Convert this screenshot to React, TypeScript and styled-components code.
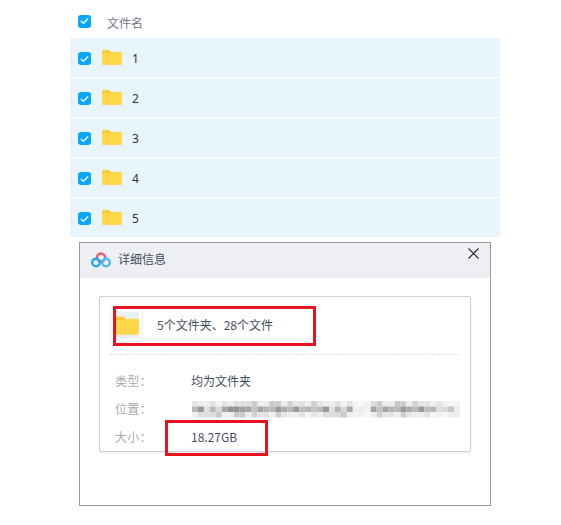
import React from "react";
import styled, { createGlobalStyle } from "styled-components";

const Global = createGlobalStyle`
  html, body { margin: 0; padding: 0; background: #fff; }
  body { font-family: "Noto Sans CJK SC", "Liberation Sans", sans-serif; font-size: 12px; }
`;

const Page = styled.div`
  width: 430px;
  height: 525px;
  margin-left: 70px;
  overflow: visible;
`;

const FileList = styled.div`
  display: flex;
  flex-direction: column;
`;

const HeaderRow = styled.div`
  height: 37.7px;
  padding: 7px 0 0 8px;
  box-sizing: border-box;
  display: flex;
  align-items: center;
  gap: 16px;
  color: #747a85;
`;

const HeaderCheck = styled.span`
  display: inline-flex;
  margin-top: -2px;
`;

const Row = styled.div`
  height: 39px;
  margin-bottom: 1px;
  padding: 3px 0 0 8px;
  box-sizing: border-box;
  display: flex;
  align-items: center;
  background: #e8f5fd;
  color: #333;
`;

const Check = styled.span`
  width: 13px;
  height: 13px;
  border-radius: 3px;
  background: #06a7ff;
  display: inline-flex;
  align-items: center;
  justify-content: center;
  flex: none;
`;

const RowIcon = styled.span`
  display: inline-flex;
  margin-left: 11px;
  margin-bottom: 2px;
`;

const RowName = styled.span`
  margin-left: 10px;
  font-family: "Noto Sans", sans-serif;
  line-height: 1;
`;

const Dialog = styled.section`
  position: relative;
  width: 412px;
  height: 264px;
  margin: 4.3px 0 0 9px;
  box-sizing: border-box;
  border: 1px solid #999;
  background: #fff;
`;

const DialogHead = styled.header`
  height: 35px;
  background: #eeeff4;
  display: flex;
  align-items: center;
  padding-left: 11px;
  padding-right: 11px;
  color: #454d5c;
  font-size: 12px;
`;

const DialogTitle = styled.span`
  margin: 0 0 3px 7px;
  flex: 1;
`;

const Close = styled.span`
  display: inline-flex;
  align-self: flex-start;
  margin-top: 5px;
`;

const Panel = styled.div`
  position: relative;
  width: 372px;
  height: 156px;
  box-sizing: border-box;
  margin: 18px 0 0 19px;
  padding: 11px 10px 0;
  border: 1px solid #cfcfcf;
  border-radius: 2px;
  box-shadow: 0 1px 2px rgba(0, 0, 0, 0.08);
`;

const Summary = styled.div`
  display: flex;
  align-items: center;
  height: 35px;
  padding-bottom: 11px;
  border-bottom: 1px dashed #d9e6f1;
  color: #454d5c;
  box-sizing: content-box;
`;

const Tile = styled.div`
  width: 33px;
  height: 34px;
  box-sizing: border-box;
  border: 1px solid #f0f0f0;
  border-radius: 2px;
  display: flex;
  align-items: center;
  justify-content: center;
  flex: none;
`;

const TileInner = styled.div`
  width: 24px;
  height: 26px;
  background: #e8f0f5;
  display: flex;
  align-items: center;
  justify-content: center;
`;

const SummaryText = styled.span`
  margin: 0 0 2px 14px;
`;

const Facts = styled.dl`
  margin: 12px 0 0;
  padding: 0 0 0 5px;
  display: flex;
  flex-direction: column;
`;

const Fact = styled.div`
  height: 28px;
  display: flex;
  align-items: center;
`;

const Key = styled.dt`
  width: 76px;
  color: #aaa;
  letter-spacing: 0.3px;
`;

const Value = styled.dd`
  margin: 0;
  color: #454d5c;
`;

const MosaicBox = styled.svg`
  display: block;
  margin: 2px 0 0 1px;
`;

const Mark = styled.div<{ $w: number; $h: number; $x: number; $y: number }>`
  position: absolute;
  left: ${(p) => p.$x}px;
  top: ${(p) => p.$y}px;
  width: ${(p) => p.$w}px;
  height: ${(p) => p.$h}px;
  box-sizing: border-box;
  border: 3px solid #e9121f;
`;

const CheckMark = () => (
  <Check>
    <svg width="9" height="8" viewBox="0 0 9 8">
      <path d="M1 4 L3.5 6.3 L8 1.5" fill="none" stroke="#fff" strokeWidth="1.5" />
    </svg>
  </Check>
);

const Folder = ({ w = 20, h = 15 }: { w?: number; h?: number }) => (
  <svg width={w} height={h} viewBox="0 0 20 15">
    <path d="M0 1.5 Q0 0 1.5 0 H6.5 Q7.5 0 8.2 1 L9 2 H18 Q20 2 20 4 V13 Q20 15 18 15 H2 Q0 15 0 13 Z" fill="#fec83c" />
    <path d="M0 4 Q0 3 1 3 H7.5 L9.5 1.8 H18 Q20 1.8 20 3.8 V13 Q20 15 18 15 H2 Q0 15 0 13 Z" fill="#ffd748" />
  </svg>
);

const Logo = () => (
  <svg width="20" height="18" viewBox="0 0 20 18">
    <circle cx="10" cy="6.5" r="4" fill="none" stroke="#ee5a6a" strokeWidth="2.4" />
    <circle cx="5" cy="11.5" r="3.8" fill="none" stroke="#27a6f0" strokeWidth="2.4" />
    <circle cx="15" cy="11.5" r="3.8" fill="none" stroke="#45bdf2" strokeWidth="2.4" />
  </svg>
);

const cells: number[][] = (() => {
  const rows: number[][] = [];
  let seed = 7;
  for (let r = 0; r < 3; r++) {
    const row: number[] = [];
    for (let c = 0; c < 45; c++) {
      seed = (seed * 73 + 41) % 211;
      const light = c > 26 && c < 30;
      row.push(light ? 235 + (seed % 15) : r === 1 ? 145 + (seed % 85) : 200 + (seed % 50));
    }
    rows.push(row);
  }
  return rows;
})();

const Mosaic = () => (
  <MosaicBox width="268" height="17" viewBox="0 0 270 17">
    {cells.map((row, r) =>
      row.map((v, c) => (
        <rect
          key={`${r}-${c}`}
          x={c * 6}
          y={r * 5.5}
          width="6"
          height="5.5"
          fill={`rgb(${v},${v},${v + 3})`}
          opacity={c > 40 ? 0.55 : 1}
        />
      ))
    )}
  </MosaicBox>
);

export default function App() {
  return (
    <Page>
      <Global />
      <FileList>
        <HeaderRow>
          <HeaderCheck>
            <CheckMark />
          </HeaderCheck>
          <span>文件名</span>
        </HeaderRow>
        {["1", "2", "3", "4", "5"].map((n) => (
          <Row key={n}>
            <CheckMark />
            <RowIcon>
              <Folder />
            </RowIcon>
            <RowName>{n}</RowName>
          </Row>
        ))}
      </FileList>
      <Dialog>
        <DialogHead>
          <Logo />
          <DialogTitle>详细信息</DialogTitle>
          <Close>
            <svg width="11" height="11" viewBox="0 0 11 11">
              <path d="M0.5 0.5 L10.5 10.5 M10.5 0.5 L0.5 10.5" stroke="#222" strokeWidth="1.1" />
            </svg>
          </Close>
        </DialogHead>
        <Panel>
          <Summary>
            <Tile>
              <TileInner>
                <Folder w={24} h={19} />
              </TileInner>
            </Tile>
            <SummaryText>5个文件夹、28个文件</SummaryText>
          </Summary>
          <Facts>
            <Fact>
              <Key>类型：</Key>
              <Value>均为文件夹</Value>
            </Fact>
            <Fact>
              <Key>位置：</Key>
              <Value>
                <Mosaic />
              </Value>
            </Fact>
            <Fact>
              <Key>大小：</Key>
              <Value>18.27GB</Value>
            </Fact>
          </Facts>
          <Mark $x={13} $y={9} $w={203} $h={40} />
          <Mark $x={65} $y={123} $w={103} $h={36} />
        </Panel>
      </Dialog>
    </Page>
  );
}
